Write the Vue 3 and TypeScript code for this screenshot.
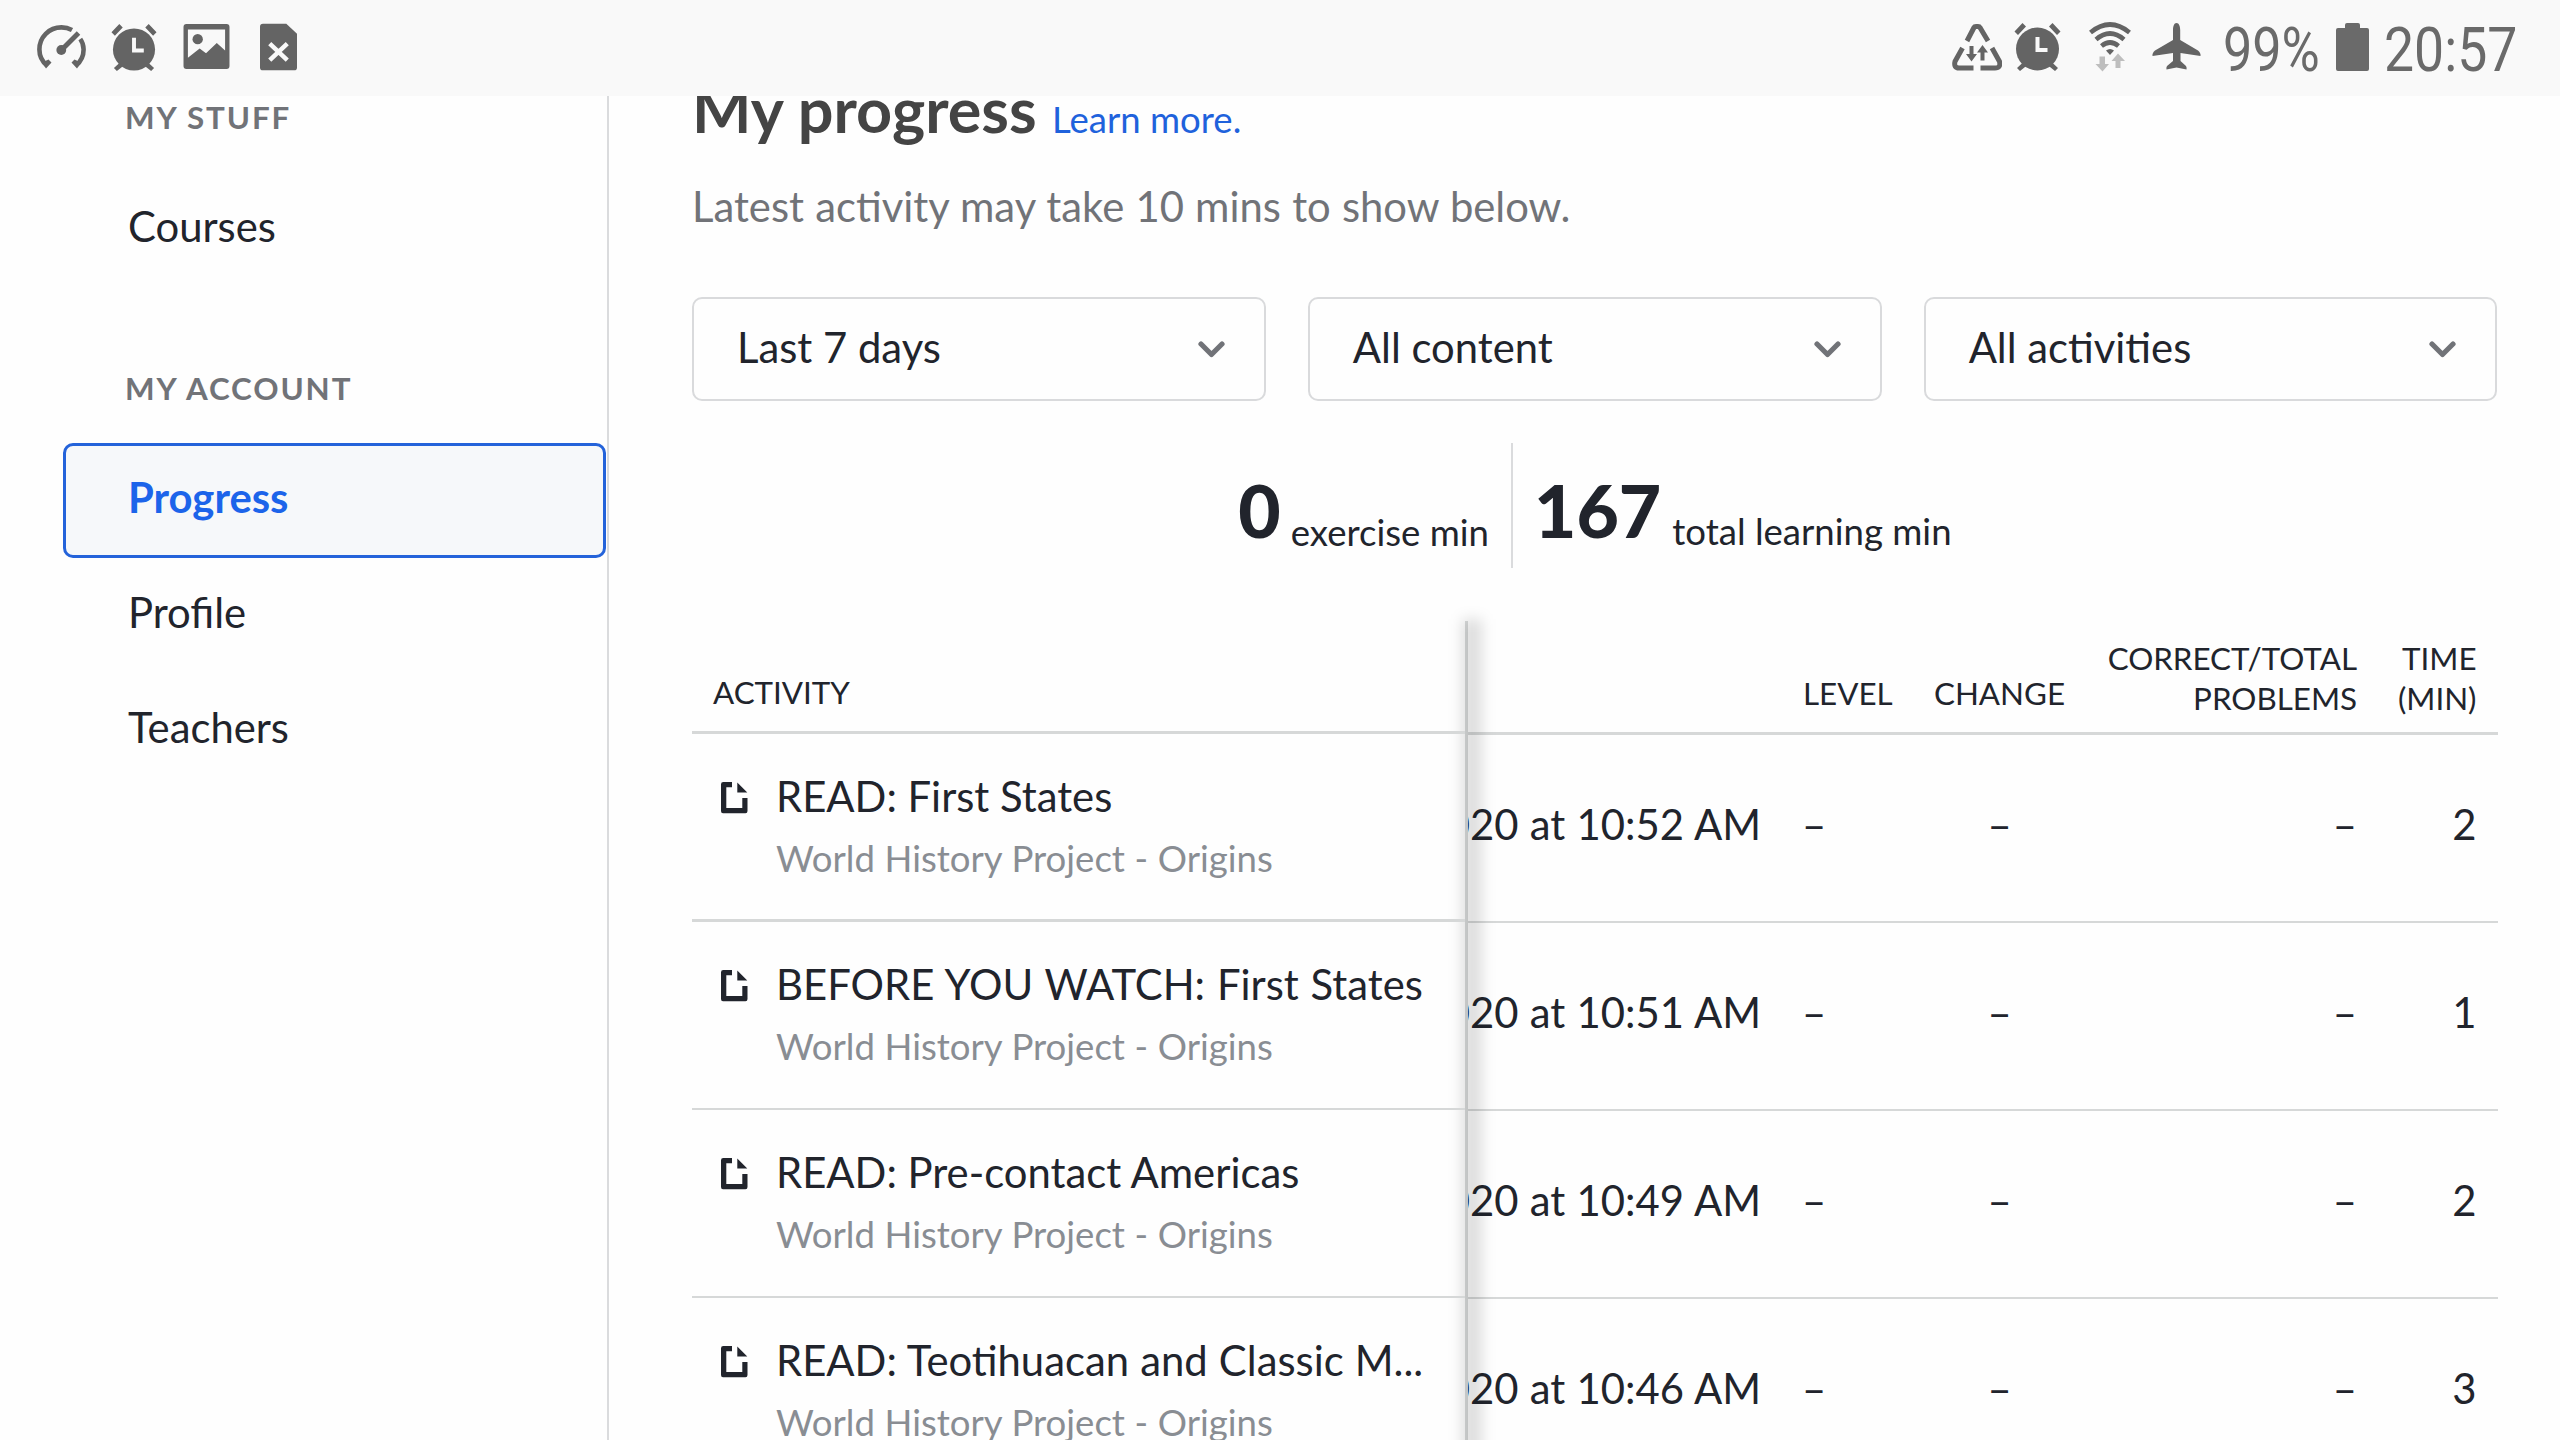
<script setup lang="ts">
interface Activity {
  title: string
  course: string
  date: string
  minutes: number
}

const filters: string[] = ['Last 7 days', 'All content', 'All activities']
const accountLinks: string[] = ['Progress', 'Profile', 'Teachers']
const course = 'World History Project - Origins'
const activities: Activity[] = [
  { title: 'READ: First States', course, date: '2020 at 10:52 AM', minutes: 2 },
  { title: 'BEFORE YOU WATCH: First States', course, date: '2020 at 10:51 AM', minutes: 1 },
  { title: 'READ: Pre-contact Americas', course, date: '2020 at 10:49 AM', minutes: 2 },
  { title: 'READ: Teotihuacan and Classic M...', course, date: '2020 at 10:46 AM', minutes: 3 },
]
</script>

<template>
  <div class="screen">
    <header class="status">
      <div class="status-left">
        <svg width="50" height="46" viewBox="0 0 50 46">
          <g fill="none" stroke="#646464" stroke-width="4.600">
            <path d="M10 40.500C4.500 36 2.400 30.500 2.400 24.500C2.400 12 12 2.400 24.500 2.400C28.500 2.400 31.800 3.300 35 5" />
            <path d="M43.300 14C45.500 17 46.600 20.500 46.600 24.500C46.600 30.500 44.500 36 39 40.500" />
            <path d="M24.500 25L41.500 8" stroke-width="5" />
          </g>
          <circle cx="24.300" cy="25" r="4.900" fill="#646464" />
          <path d="M5 37.500L9 43.500L14.500 37.500L11.500 34.500ZM44 37.500L40 43.500L34.500 37.500L37.500 34.500Z" fill="#646464" />
        </svg>
        <svg width="46" height="47" viewBox="0 0 46 48">
          <path d="M8 0L11.500 3.500L3.500 12L0 8.500ZM38 0L34.500 3.500L42.500 12L46 8.500Z" fill="#646464" />
          <path d="M10 38L2.500 45L5.500 48L13 42ZM36 38L43.500 45L40.500 48L33 42Z" fill="#646464" />
          <ellipse cx="23" cy="26" rx="21.500" ry="21.500" fill="#646464" />
          <path d="M23 14V27H33" fill="none" stroke="#f9f9f9" stroke-width="4" />
        </svg>
        <svg width="47" height="45" viewBox="0 0 47 46">
          <path fill-rule="evenodd" d="M3 0H44Q47 0 47 3V43Q47 46 44 46H3Q0 46 0 43V3Q0 0 3 0ZM4.500 5.500V34.500L16.500 25L23 30L34 19.500L42.500 27V5.500Z" fill="#646464" />
          <circle cx="14.500" cy="15.500" r="5.300" fill="#646464" />
        </svg>
        <svg width="37" height="48" viewBox="0 0 38 48">
          <path d="M3 0H27L38 10.500V45Q38 48 35 48H3Q0 48 0 45V3Q0 0 3 0Z" fill="#646464" />
          <path d="M10 20.500L28 37.500M28 20.500L10 37.500" stroke="#f9f9f9" stroke-width="4.600" />
        </svg>
      </div>
      <div class="status-right">
        <svg class="recycle" width="50" height="47" viewBox="0 0 50 47">
          <g fill="none" stroke="#646464" stroke-width="5">
            <path d="M15 17L22 3.500Q22.500 2.500 24 2.500H26Q27.500 2.500 28 3.500L36 17" />
            <path d="M10.500 24L3 37.500Q1.500 44 7 44H21.500" />
            <path d="M40 24L47.500 37.500Q49 44 43 44H28.500" />
          </g>
          <path d="M17.500 22H21.500V30H25L19.500 37.500L14 30H17.500ZM28.500 36.500H32.500V28.500H36L30.500 21L25 28.500H28.500Z" fill="#646464" />
        </svg>
        <svg class="alarm" width="47" height="48" viewBox="0 0 46 48">
          <path d="M8 0L11.500 3.500L3.500 12L0 8.500ZM38 0L34.500 3.500L42.500 12L46 8.500Z" fill="#646464" />
          <path d="M10 38L2.500 45L5.500 48L13 42ZM36 38L43.500 45L40.500 48L33 42Z" fill="#646464" />
          <ellipse cx="23" cy="26" rx="21.500" ry="21.500" fill="#646464" />
          <path d="M23 14V27H33" fill="none" stroke="#f9f9f9" stroke-width="4" />
        </svg>
        <svg class="wifi" width="42" height="50" viewBox="0 0 42 50">
          <g fill="none" stroke="#646464" stroke-width="4.600">
            <path d="M1.500 10.500Q21 -5.500 40.500 10.500" />
            <path d="M7 17.500Q21 5.500 35 17.500" />
            <path d="M12.500 24Q21 17 29.500 24" />
          </g>
          <path d="M17 28.500Q21 25.500 25 28.500L21 33Z" fill="#646464" />
          <path d="M10.500 34.500H16V42H20L13.500 49.500L6.500 42H10.500ZM26.500 46V39H22.500L29 31.500L36 39H31.500V46Z" fill="#bebebe" />
        </svg>
        <svg class="plane" width="49" height="47" viewBox="0 0 49 47">
          <path d="M24.500 0C27 0 28.200 3.500 28.200 7V17L46 27.500Q49 30 48.500 33L28.500 30V38L34 43Q35 44.500 34.500 46.500L24.500 44.500L14.500 46.500Q14 44.500 15 43L21 38V30L.5 33Q0 30 3 27.500L21 17V7C21 3.500 22 0 24.500 0Z" fill="#646464" />
        </svg>
        <span class="status-text percent">99%</span>
        <svg class="battery" width="33" height="48" viewBox="0 0 33 48">
          <path d="M11 0H22Q24 0 24 2V5H31Q33 5 33 7V46Q33 48 31 48H2Q0 48 0 46V7Q0 5 2 5H9V2Q9 0 11 0Z" fill="#6a6a6a" />
        </svg>
        <span class="status-text clock">20:57</span>
      </div>
    </header>

    <div class="page">
      <nav class="sidebar">
        <h2 class="nav-title">MY STUFF</h2>
        <a class="nav-link">Courses</a>
        <h2 class="nav-title account">MY ACCOUNT</h2>
        <a v-for="(link, i) in accountLinks" :key="link" class="nav-link" :class="{ active: i === 0 }">{{ link }}</a>
      </nav>

      <main class="main">
        <h1 class="title">My progress <a class="learn">Learn more.</a></h1>
        <p class="note">Latest activity may take 10 mins to show below.</p>

        <div class="filters">
          <div v-for="f in filters" :key="f" class="select">
            <span>{{ f }}</span>
            <svg width="27" height="17" viewBox="0 0 27 17">
              <path d="M3 3L13.500 13.500L24 3" fill="none" stroke="#717378" stroke-width="5.200" stroke-linecap="round" stroke-linejoin="round" />
            </svg>
          </div>
        </div>

        <div class="stats">
          <div class="stat exercise"><strong>0</strong><span>exercise min</span></div>
          <div class="stat learning"><strong>167</strong><span>total learning min</span></div>
        </div>

        <div class="table">
          <div class="pinned">
            <div class="pinned-head">ACTIVITY</div>
            <div v-for="a in activities" :key="a.title" class="pinned-row">
              <svg width="27" height="32" viewBox="0 0 27 32">
                <path d="M11 0V5.300H5.300V26H21.300V16H26.500V29Q26.500 31.300 24.500 31.300H2Q0 31.300 0 29V2.300Q0 0 2.300 0ZM16.300 .5L26.300 10.500H16.300Z" fill="#21242c" />
              </svg>
              <div>
                <div class="name">{{ a.title }}</div>
                <div class="course">{{ a.course }}</div>
              </div>
            </div>
          </div>
          <div class="scroll">
            <div class="grid head">
              <span></span>
              <span class="single">LEVEL</span>
              <span class="single change">CHANGE</span>
              <span class="right">CORRECT/TOTAL<br />PROBLEMS</span>
              <span class="right">TIME<br />(MIN)</span>
            </div>
            <div v-for="a in activities" :key="a.title" class="grid row">
              <span class="date">{{ a.date }}</span>
              <span>–</span>
              <span class="change">–</span>
              <span class="right">–</span>
              <span class="right">{{ a.minutes }}</span>
            </div>
          </div>
        </div>
      </main>
    </div>
  </div>
</template>

<style>
html,
body {
  margin: 0;
  overflow: hidden;
  background: #fff;
}
</style>

<style scoped>
.screen {
  width: 2560px;
  height: 1440px;
  display: flex;
  flex-direction: column;
  overflow: hidden;
  background: #fefefe;
  color: #21242c;
  font-family: Lato, 'Liberation Sans', sans-serif;
  font-size: 41.8px;
}
.screen * {
  box-sizing: border-box;
}
svg {
  display: block;
  flex: none;
}

/* status bar */
.status {
  position: relative;
  z-index: 2;
  flex: none;
  height: 96px;
  background: #f9f9f9;
  display: flex;
  justify-content: space-between;
}
.status-left {
  display: flex;
  padding: 23px 0 0 37px;
}
.status-left svg:nth-child(1) {
  margin-top: 2px;
}
.status-left svg:nth-child(2) {
  margin: 1px 0 0 24px;
}
.status-left svg:nth-child(3) {
  margin: 1px 0 0 26px;
}
.status-left svg:nth-child(4) {
  margin: 0 0 0 30px;
}
.status-right {
  display: flex;
  width: 608px;
  padding-top: 23px;
}
.recycle { margin-top: 1px; }
.alarm { margin-left: 12px; }
.wifi { margin: -1px 0 0 28px; }
.plane { margin-left: 21px; }
.status-text {
  font-family: Roboto, sans-serif;
  font-weight: 400;
  font-size: 61px;
  line-height: 60px;
  height: 60px;
  color: #6a6a6a;
  white-space: nowrap;
  transform-origin: 0 50%;
}
.percent { width: 93px; margin: -3px 0 0 22px; transform: scaleX(0.855); }
.battery { margin-left: 20px; }
.clock { margin: -3px 0 0 15px; transform: scaleX(0.878); }

.page {
  flex: 1;
  min-height: 0;
  display: flex;
}

/* sidebar */
.sidebar {
  flex: none;
  width: 609px;
  height: 1344px;
  border-right: 2px solid #dadbdd;
  padding: 0 1px 0 63px;
}
.nav-title {
  margin: 0;
  padding: 0 0 0 62px;
  height: 76px;
  font-size: 31.350px;
  line-height: 42px;
  letter-spacing: 1.900px;
  font-weight: 700;
  color: #717378;
}
.nav-title.account {
  margin-top: 80px;
}
.nav-link {
  display: block;
  height: 115px;
  padding-left: 65px;
  line-height: 108px;
  border: 0;
}
.nav-link.active {
  border: 3px solid #2463da;
  border-radius: 10px;
  background: #f6f8fa;
  color: #1c64ea;
  font-weight: 700;
  padding-left: 62px;
  line-height: 103px;
}

/* main column */
.main {
  flex: none;
  width: 1805.500px;
  margin-left: 83px;
}
.title {
  margin: -24px 0 0;
  height: 88px;
  font-size: 62.950px;
  line-height: 74px;
  font-weight: 700;
  color: #444;
  white-space: nowrap;
}
.learn {
  font-size: 36.570px;
  font-weight: 400;
  color: #1f62dc;
}
.note {
  margin: 0;
  height: 137px;
  line-height: 92px;
  word-spacing: 0.500px;
  color: #717378;
}
.filters {
  display: grid;
  grid-template-columns: repeat(3, 1fr);
  gap: 42px;
}
.select {
  height: 104px;
  display: flex;
  align-items: center;
  justify-content: space-between;
  padding: 0 39px 4px 43px;
  border: 2.610px solid #d9dadc;
  border-radius: 10px;
}
.select svg {
  margin-top: 4px;
}

.stats {
  height: 178px;
  margin-top: 42px;
  display: flex;
}
.stat {
  height: 125px;
  display: flex;
  white-space: nowrap;
}
.stat strong {
  font-size: 73.140px;
  line-height: 88px;
  font-weight: 900;
  padding-top: 23px;
}
.stat span {
  font-size: 36.570px;
  line-height: 44px;
  padding-top: 66px;
}
.exercise {
  width: 821px;
  justify-content: flex-end;
  padding-right: 22px;
  border-right: 2px solid #dadbdd;
}
.exercise span {
  margin-left: 10px;
  padding-top: 67px;
}
.learning {
  padding-left: 21px;
}
.learning span {
  margin-left: 11px;
}

/* table */
.table {
  height: 819px;
  display: flex;
}
.pinned {
  position: relative;
  z-index: 1;
  flex: none;
  width: 776px;
  border-right: 3px solid #d9dbdb;
}
.pinned::after {
  content: '';
  position: absolute;
  z-index: -1;
  top: -2px;
  bottom: -20px;
  left: 770px;
  width: 20px;
  background: rgba(0, 0, 0, 0.13);
  filter: blur(7px);
}
.pinned-head {
  height: 113px;
  padding: 52px 0 0 21px;
  font-size: 31.350px;
  line-height: 38px;
  border-bottom: 3px solid #d6d8d8;
}
.pinned-row {
  height: 188px;
  padding: 37px 0 0 29px;
  display: flex;
  border-bottom: 2px solid #d6d8d8;
  white-space: nowrap;
}
.pinned-row:nth-child(2) {
  border-bottom-width: 3px;
}
.pinned-row:nth-child(3) .name {
  word-spacing: 1.200px;
}
.pinned-row:nth-child(5) .name {
  word-spacing: 0.500px;
}
.pinned-row svg {
  margin: 11px 28px 0 0;
}
.name {
  line-height: 51px;
}
.course {
  margin-top: 10px;
  font-size: 36.570px;
  line-height: 52px;
  word-spacing: 0.250px;
  color: #898d93;
}
.scroll {
  flex: 1;
  min-width: 0;
}
.grid {
  display: grid;
  grid-template-columns: 310px 107px 229px 243px 1fr;
  white-space: nowrap;
}
.head {
  height: 114px;
  font-size: 31.350px;
  line-height: 39.700px;
  padding: 18px 21px 0 0;
  border-bottom: 3px solid #d6d8d8;
}
.single {
  padding-top: 35px;
}
.row {
  height: 188px;
  padding: 0 21px 0 0;
  line-height: 178px;
  border-bottom: 2px solid #d6d8d8;
}
.grid .single,
.row span:nth-child(2) {
  padding-left: 25px;
}
.row span:nth-child(2) {
  padding-left: 24px;
}
.date {
  display: flex;
  justify-content: flex-end;
  overflow: hidden;
  padding-right: 17px;
  word-spacing: 0.600px;
}
.grid .change {
  padding-left: 0;
  padding-right: 0;
  text-align: center;
}
.right {
  justify-self: end;
  text-align: right;
}
</style>
